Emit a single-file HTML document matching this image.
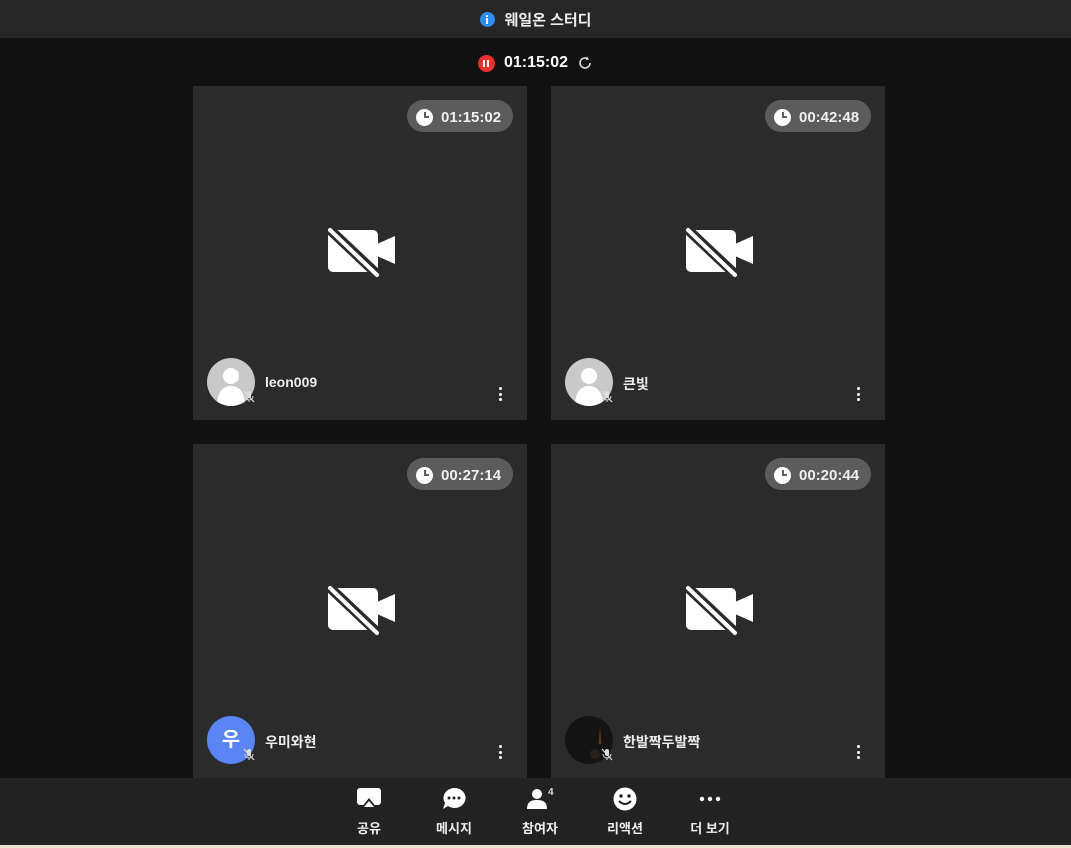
<!DOCTYPE html>
<html><head><meta charset="utf-8"><style>
*{margin:0;padding:0;box-sizing:border-box}
body{width:1071px;height:848px;background:#111;position:relative;overflow:hidden;font-family:"Liberation Sans","Noto Sans CJK KR",sans-serif;color:#fff}
.top{position:absolute;left:0;top:0;width:1071px;height:38px;background:#262626;display:flex;align-items:center;justify-content:center;font-size:15px;font-weight:bold;color:#eee}
.info{width:15px;height:15px;border-radius:50%;background:#2d8cf0;margin-right:10px;position:relative}
.info:after{content:"";position:absolute;left:6.5px;top:6px;width:2px;height:6px;background:#fff}
.info:before{content:"";position:absolute;left:6.5px;top:3px;width:2px;height:2px;background:#fff}
.rec{position:absolute;top:52px;left:0;width:1071px;display:flex;justify-content:center;align-items:center;font-size:16px;font-weight:bold;height:22px}
.red{width:17px;height:17px;border-radius:50%;background:#e8322b;margin-right:9px;position:relative}
.red:before,.red:after{content:"";position:absolute;top:5px;width:2px;height:7px;background:#fff}
.red:before{left:5.5px}.red:after{left:9.5px}
.tile{position:absolute;width:334px;height:334px;background:#2b2b2b}
.pill{position:absolute;left:214px;top:14px;width:106px;height:32px;border-radius:16px;background:#5c5c5c;font-size:15px;font-weight:bold;display:flex;align-items:center;padding-left:9px;color:#f0f0f0;padding-top:2px}
.clk{width:17px;height:17px;border-radius:50%;background:#fff;margin-right:8px;position:relative}
.clk:before{content:"";position:absolute;left:7.5px;top:3px;width:2px;height:6px;background:#5c5c5c}
.clk:after{content:"";position:absolute;left:7.5px;top:7.5px;width:5px;height:2px;background:#5c5c5c}
.cam{position:absolute;left:0;top:0}
.av{position:absolute;left:14px;top:272px;width:48px;height:48px;border-radius:50%;background:#c9c9c9;overflow:hidden}
.name{position:absolute;left:72px;top:288px;font-size:14px;font-weight:bold;color:#eee}
.dots{position:absolute;left:306px;top:301px;width:3px}
.dots i{display:block;width:3px;height:3px;background:#fff;border-radius:50%;margin-bottom:2.5px}
.mic{position:absolute;left:48px;top:302px;width:16px;height:16px}
.bar{position:absolute;left:0;top:778px;width:1071px;height:67px;background:#222}
.line{position:absolute;left:0;top:845px;width:1071px;height:3px;background:#e8e6d0}
.btn{position:absolute;top:0;width:70px;text-align:center;font-size:13px;font-weight:bold;color:#eee}
.btn svg{display:block;margin:9px auto 0}
.btn span{display:block;margin-top:7px}
</style></head><body>
<div class="top"><div class="info"></div>웨일온 스터디</div>
<div class="rec"><div class="red"></div>01:15:02<svg width="16" height="16" viewBox="0 0 16 16" style="margin-left:9px"><path d="M13 8a5 5 0 1 1-2-4" fill="none" stroke="#ddd" stroke-width="1.6"/><path d="M10 1.5l2 3-3.2.6z" fill="#ddd"/></svg></div>

<div class="tile" style="left:193px;top:86px">
<div class="pill"><div class="clk"></div>01:15:02</div>
<svg class="cam" width="334" height="334"><rect x="135" y="144" width="50" height="42" rx="5" fill="#fff"/><path d="M184 158l18-8v28l-18-8z" fill="#fff"/><path d="M134 141l52 49" stroke="#2b2b2b" stroke-width="10"/><path d="M137 144l47 45" stroke="#fff" stroke-width="4" stroke-linecap="round"/></svg>
<div class="av"><svg width="48" height="48"><circle cx="24" cy="18" r="8" fill="#fff"/><path d="M10 48c0-14 6-20 14-20s14 6 14 20z" fill="#fff"/></svg></div>
<svg class="mic" viewBox="0 0 16 16"><rect x="6" y="3" width="4" height="7" rx="2" fill="#ddd"/><path d="M4 8a4 4 0 0 0 8 0M8 12v2" stroke="#ddd" fill="none"/><path d="M3 3l10 11" stroke="#ddd" stroke-width="1.3"/></svg>
<div class="name">leon009</div><div class="dots"><i></i><i></i><i></i></div>
</div>
<div class="tile" style="left:551px;top:86px">
<div class="pill"><div class="clk"></div>00:42:48</div>
<svg class="cam" width="334" height="334"><rect x="135" y="144" width="50" height="42" rx="5" fill="#fff"/><path d="M184 158l18-8v28l-18-8z" fill="#fff"/><path d="M134 141l52 49" stroke="#2b2b2b" stroke-width="10"/><path d="M137 144l47 45" stroke="#fff" stroke-width="4" stroke-linecap="round"/></svg>
<div class="av"><svg width="48" height="48"><circle cx="24" cy="18" r="8" fill="#fff"/><path d="M10 48c0-14 6-20 14-20s14 6 14 20z" fill="#fff"/></svg></div>
<svg class="mic" viewBox="0 0 16 16"><rect x="6" y="3" width="4" height="7" rx="2" fill="#ddd"/><path d="M4 8a4 4 0 0 0 8 0M8 12v2" stroke="#ddd" fill="none"/><path d="M3 3l10 11" stroke="#ddd" stroke-width="1.3"/></svg>
<div class="name">큰빛</div><div class="dots"><i></i><i></i><i></i></div>
</div>
<div class="tile" style="left:193px;top:444px">
<div class="pill"><div class="clk"></div>00:27:14</div>
<svg class="cam" width="334" height="334"><rect x="135" y="144" width="50" height="42" rx="5" fill="#fff"/><path d="M184 158l18-8v28l-18-8z" fill="#fff"/><path d="M134 141l52 49" stroke="#2b2b2b" stroke-width="10"/><path d="M137 144l47 45" stroke="#fff" stroke-width="4" stroke-linecap="round"/></svg>
<div class="av" style="background:#5b85f5;text-align:center;line-height:48px;font-size:20px;font-weight:bold">우</div>
<svg class="mic" viewBox="0 0 16 16"><rect x="6" y="3" width="4" height="7" rx="2" fill="#ddd"/><path d="M4 8a4 4 0 0 0 8 0M8 12v2" stroke="#ddd" fill="none"/><path d="M3 3l10 11" stroke="#ddd" stroke-width="1.3"/></svg>
<div class="name">우미와현</div><div class="dots"><i></i><i></i><i></i></div>
</div>
<div class="tile" style="left:551px;top:444px">
<div class="pill"><div class="clk"></div>00:20:44</div>
<svg class="cam" width="334" height="334"><rect x="135" y="144" width="50" height="42" rx="5" fill="#fff"/><path d="M184 158l18-8v28l-18-8z" fill="#fff"/><path d="M134 141l52 49" stroke="#2b2b2b" stroke-width="10"/><path d="M137 144l47 45" stroke="#fff" stroke-width="4" stroke-linecap="round"/></svg>
<div class="av" style="background:#131313"><svg width="48" height="48"><path d="M35 10l1.5 18h-3z" fill="#5a3818"/><circle cx="30" cy="38" r="5" fill="#2a2015"/></svg></div>
<svg class="mic" viewBox="0 0 16 16"><rect x="6" y="3" width="4" height="7" rx="2" fill="#ddd"/><path d="M4 8a4 4 0 0 0 8 0M8 12v2" stroke="#ddd" fill="none"/><path d="M3 3l10 11" stroke="#ddd" stroke-width="1.3"/></svg>
<div class="name">한발짝두발짝</div><div class="dots"><i></i><i></i><i></i></div>
</div>

<div class="bar">
<div class="btn" style="left:334px"><svg width="26" height="24"><rect x="1" y="1" width="24" height="17" rx="3" fill="#fff"/><path d="M13 11l8 10H5z" fill="#222"/><path d="M13 14l5 6H8z" fill="#fff"/></svg><span>공유</span></div>
<div class="btn" style="left:419px"><svg width="26" height="24"><path d="M13 1a11 10 0 1 1-6 18l-5 3 2-6A11 10 0 0 1 13 1z" fill="#fff"/><circle cx="8" cy="11" r="1.5" fill="#222"/><circle cx="13" cy="11" r="1.5" fill="#222"/><circle cx="18" cy="11" r="1.5" fill="#222"/></svg><span>메시지</span></div>
<div class="btn" style="left:505px"><svg width="30" height="24"><circle cx="12" cy="7" r="5" fill="#fff"/><path d="M2 22c0-7 4-9 10-9s10 2 10 9z" fill="#fff"/><text x="23" y="8" font-size="10" fill="#ddd" font-family="Liberation Sans">4</text></svg><span>참여자</span></div>
<div class="btn" style="left:590px"><svg width="26" height="24"><circle cx="13" cy="12" r="11.5" fill="#fff"/><circle cx="9" cy="9" r="1.7" fill="#222"/><circle cx="17" cy="9" r="1.7" fill="#222"/><path d="M7 14q6 6 12 0" stroke="#222" stroke-width="2" fill="none"/></svg><span>리액션</span></div>
<div class="btn" style="left:675px"><svg width="26" height="24"><circle cx="5" cy="12" r="2.2" fill="#fff"/><circle cx="13" cy="12" r="2.2" fill="#fff"/><circle cx="21" cy="12" r="2.2" fill="#fff"/></svg><span>더 보기</span></div>
</div>
<div class="line"></div>
</body></html>
